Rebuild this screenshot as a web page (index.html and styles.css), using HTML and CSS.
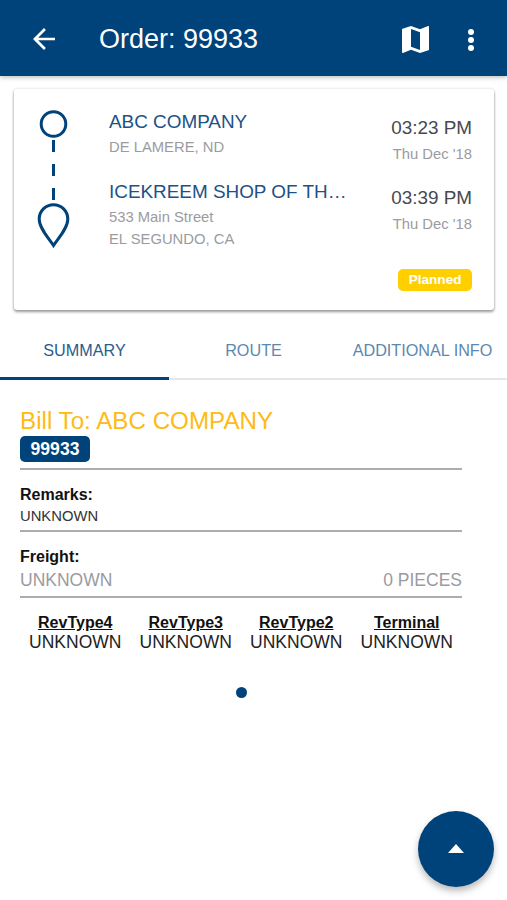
FILE: index.html
```html
<!DOCTYPE html>
<html lang="en">
<head>
  <meta charset="UTF-8" />
  <meta name="viewport" content="width=device-width, initial-scale=1" />
  <title>Order: 99933</title>
  <link rel="stylesheet" href="styles.css">
</head>
<body>

  <!-- Toolbar -->
  <header class="toolbar">
    <svg class="back" viewBox="0 0 22 22">
      <path d="M22 9.7H5.2l7.7-7.8L11 0 0 11l11 11 1.9-1.9-7.7-7.8H22z" fill="#fff"/>
    </svg>
    <h1>Order: 99933</h1>
    <svg class="map" viewBox="3 3 18 18">
      <path d="M20.5 3l-.16.03L15 5.1 9 3 3.36 4.9c-.21.07-.36.25-.36.48V20.5c0 .28.22.5.5.5l.16-.03L9 18.9l6 2.1 5.64-1.9c.21-.07.36-.25.36-.48V3.5c0-.28-.22-.5-.5-.5zM15 19l-6-2.11V5l6 2.11V19z" fill="#fff"/>
    </svg>
    <svg class="more" viewBox="0 0 6 22">
      <g fill="#fff">
        <circle cx="3" cy="3" r="3"/>
        <circle cx="3" cy="11" r="3"/>
        <circle cx="3" cy="19" r="3"/>
      </g>
    </svg>
  </header>

  <!-- Stops Card -->
  <section class="card">
    <svg class="track" viewBox="0 0 34 140">
      <g fill="none" stroke="#00427a" stroke-width="3">
        <circle cx="17.5" cy="15" r="12.3"/>
        <path d="M17.5 31v12M17.5 55v12M17.5 79v12"/>
        <path d="M17.5 136.500C13 129.500 3.200 119.500 3.200 110a14.300 14.300 0 0 1 28.600 0C31.800 119.500 22 129.500 17.500 136.500z"/>
      </g>
    </svg>
    <div class="stops">
      <div class="stop">
        <h2>ABC COMPANY</h2>
        <p>DE LAMERE, ND</p>
      </div>
      <div class="stop">
        <h2>ICEKREEM SHOP OF TH…</h2>
        <p>533 Main Street</p>
        <p>EL SEGUNDO, CA</p>
      </div>
    </div>
    <div class="times">
      <div class="time">
        <h3>03:23 PM</h3>
        <p>Thu Dec '18</p>
      </div>
      <div class="time">
        <h3>03:39 PM</h3>
        <p>Thu Dec '18</p>
      </div>
      <span class="status">Planned</span>
    </div>
  </section>

  <!-- Tabs -->
  <nav class="tabs">
    <a class="tab active">SUMMARY</a>
    <a class="tab">ROUTE</a>
    <a class="tab">ADDITIONAL INFO</a>
  </nav>

  <!-- Summary -->
  <main class="summary">
    <div class="bill">
      <h2>Bill To: ABC COMPANY</h2>
      <span class="order-no">99933</span>
    </div>
    <div class="remarks">
      <h4>Remarks:</h4>
      <p>UNKNOWN</p>
    </div>
    <div class="freight">
      <h4>Freight:</h4>
      <div class="freight-row">
        <span>UNKNOWN</span>
        <span>0 PIECES</span>
      </div>
    </div>
    <div class="types">
      <div><h5>RevType4</h5><p>UNKNOWN</p></div>
      <div><h5>RevType3</h5><p>UNKNOWN</p></div>
      <div><h5>RevType2</h5><p>UNKNOWN</p></div>
      <div><h5>Terminal</h5><p>UNKNOWN</p></div>
    </div>
    <div class="dot"></div>
  </main>

  <button class="fab" aria-label="Open actions">
    <svg viewBox="0 0 16 9"><path d="M0 9L8 0l8 9z" fill="#fff"/></svg>
  </button>

</body>
</html>
```
FILE: styles.css
```css
/* --- Reset & Layout --- */
* {
  box-sizing: border-box;
  margin: 0;
  padding: 0;
}
body {
  font-family: "Liberation Sans", Arial, sans-serif;
  background: #fff;
  height: 100vh;
  overflow: hidden;
}

/* --- Toolbar --- */
.toolbar {
  display: flex;
  align-items: center;
  height: 76px;
  padding: 2px 33px 0;
  background: #00427a;
  box-shadow: 0 1px 5px rgba(0, 0, 0, 0.3);
}

.toolbar h1 {
  flex: 1;
  margin-left: 44px;
  font-size: 27px;
  font-weight: normal;
  line-height: 32px;
  color: #fff;
}

.back {
  width: 22px;
  height: 22px;
}

.map {
  width: 27px;
  height: 27px;
}

.more {
  width: 6px;
  height: 22px;
  margin: 1px 0 0 39px;
}

/* --- Stops Card --- */
.card {
  display: flex;
  height: 221px;
  margin: 13px 13px 0 14px;
  padding: 19px 22px 0 22px;
  border-radius: 3px;
  box-shadow: 0 2px 3px rgba(0, 0, 0, 0.38), 0 0 3px rgba(0, 0, 0, 0.14);
}

.track {
  width: 34px;
  height: 140px;
  margin-top: 1px;
}

.stops {
  width: 241px;
  margin-left: 39px;
}

.stop {
  height: 70px;
}

.stop h2 {
  padding-top: 1px;
  margin-bottom: 1px;
  font-size: 18.9px;
  font-weight: normal;
  line-height: 26px;
  color: #1d5286;
  white-space: nowrap;
}

.stop p,
.time p {
  font-size: 14.8px;
  line-height: 22px;
  color: #9b9b9f;
}

.times {
  flex: 1;
  padding-top: 7px;
  text-align: right;
}

.time {
  height: 70px;
}

.time h3 {
  font-size: 18.9px;
  font-weight: normal;
  line-height: 26px;
  color: #48484e;
}

.time p {
  padding-top: 2px;
}

.status {
  display: inline-block;
  height: 22px;
  margin-top: 14px;
  padding: 0 10.5px;
  border-radius: 5px;
  background: #ffcf00;
  color: #fff;
  font-size: 13.6px;
  font-weight: bold;
  line-height: 21px;
}

/* --- Tabs --- */
.tabs {
  display: grid;
  grid-template-columns: repeat(3, 1fr);
  height: 60px;
  margin-top: 10px;
  box-shadow: inset 0 -2px #e6e6e8;
}

.tab {
  height: 60px;
  font-size: 16.2px;
  line-height: 60px;
  color: #5c88b0;
  text-align: center;
  white-space: nowrap;
}

.tab.active {
  color: #2a5c8b;
  border-bottom: 3px solid #00427a;
}

/* --- Summary --- */
.summary {
  width: 442px;
  margin: 26px 0 0 20px;
}

.bill {
  height: 64px;
  border-bottom: 2px solid #adadb1;
}

.bill h2 {
  font-size: 24.2px;
  font-weight: normal;
  line-height: 30px;
  color: #fdbb16;
}

.order-no {
  display: block;
  width: 70px;
  height: 26px;
  border-radius: 5px;
  background: #00427a;
  color: #fff;
  font-size: 17.6px;
  font-weight: bold;
  line-height: 26px;
  text-align: center;
}

.remarks,
.freight {
  padding-top: 14px;
  border-bottom: 2px solid #adadb1;
}

.remarks {
  height: 62px;
}

.freight {
  height: 66px;
}

.summary h4 {
  font-size: 16px;
  line-height: 22px;
  color: #111;
}

.remarks p {
  font-size: 14.8px;
  line-height: 20px;
  color: #333;
}

.freight-row {
  display: flex;
  justify-content: space-between;
  font-size: 17.5px;
  line-height: 24px;
  color: #9b9b9f;
}

.types {
  display: grid;
  grid-template-columns: repeat(4, 1fr);
  padding-top: 15px;
  text-align: center;
}

.types h5 {
  font-size: 16px;
  line-height: 20px;
  color: #111;
  text-decoration: underline;
}

.types p {
  font-size: 17.5px;
  line-height: 18px;
  color: #222;
}

.dot {
  width: 11px;
  height: 11px;
  margin: 36px auto 0;
  border-radius: 50%;
  background: #00427a;
}

/* --- Floating Button --- */
.fab {
  position: fixed;
  right: 13px;
  bottom: 13px;
  display: flex;
  align-items: center;
  justify-content: center;
  width: 76px;
  height: 76px;
  border: none;
  border-radius: 50%;
  background: #00427a;
  box-shadow: 0 4px 7px rgba(0, 0, 0, 0.28);
}

.fab svg {
  width: 16px;
  height: 9px;
  margin-top: -2px;
}
```
